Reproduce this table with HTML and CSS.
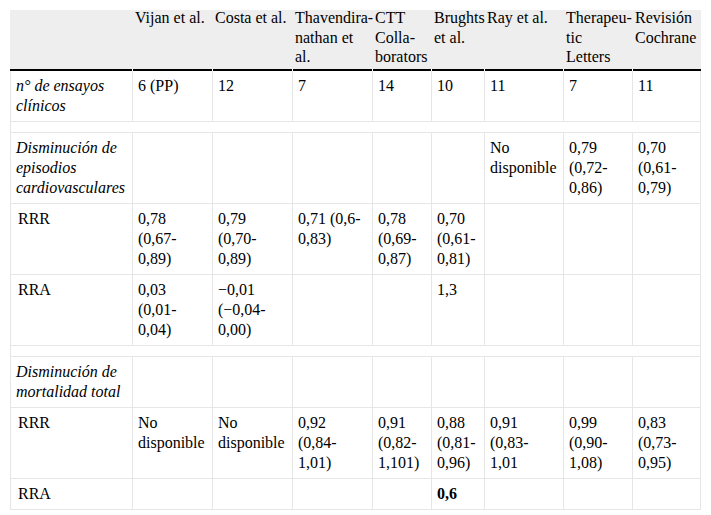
FILE: index.html
```html
<!DOCTYPE html>
<html lang="es">
<head>
<meta charset="utf-8">
<title>Tabla</title>
<link rel="stylesheet" href="styles.css">
</head>
<body>
<table class="data">
  <colgroup>
    <col class="c-label">
    <col class="c-80">
    <col class="c-80">
    <col class="c-80">
    <col class="c-59">
    <col class="c-53">
    <col class="c-79">
    <col class="c-69">
    <col class="c-68">
  </colgroup>
  <thead>
    <tr>
      <th><span class="th-text"></span></th>
      <th><span class="th-text">Vijan et al.</span></th>
      <th><span class="th-text">Costa et al.</span></th>
      <th><span class="th-text">Thavendira&shy;nathan et al.</span></th>
      <th><span class="th-text">CTT Colla&shy;borators</span></th>
      <th><span class="th-text">Brughts et al.</span></th>
      <th><span class="th-text">Ray et al.</span></th>
      <th><span class="th-text">Therapeu&shy;tic Letters</span></th>
      <th><span class="th-text">Revisión Cochrane</span></th>
    </tr>
  </thead>
  <tbody>
    <tr>
      <td class="group">n° de ensayos clínicos</td>
      <td>6 (PP)</td>
      <td>12</td>
      <td>7</td>
      <td>14</td>
      <td>10</td>
      <td>11</td>
      <td>7</td>
      <td>11</td>
    </tr>
    <tr class="spacer"><td colspan="9"></td></tr>
    <tr>
      <td class="group">Disminución de episodios cardiovasculares</td>
      <td></td>
      <td></td>
      <td></td>
      <td></td>
      <td></td>
      <td>No disponible</td>
      <td>0,79 (0,72-0,86)</td>
      <td>0,70 (0,61-0,79)</td>
    </tr>
    <tr>
      <td class="sub">RRR</td>
      <td>0,78 (0,67-0,89)</td>
      <td>0,79 (0,70-0,89)</td>
      <td>0,71 (0,6-0,83)</td>
      <td>0,78 (0,69-0,87)</td>
      <td>0,70 (0,61-0,81)</td>
      <td></td>
      <td></td>
      <td></td>
    </tr>
    <tr>
      <td class="sub">RRA</td>
      <td>0,03 (0,01-0,04)</td>
      <td>−0,01 (−0,04-0,00)</td>
      <td></td>
      <td></td>
      <td>1,3</td>
      <td></td>
      <td></td>
      <td></td>
    </tr>
    <tr class="spacer"><td colspan="9"></td></tr>
    <tr>
      <td class="group">Disminución de mortalidad total</td>
      <td></td>
      <td></td>
      <td></td>
      <td></td>
      <td></td>
      <td></td>
      <td></td>
      <td></td>
    </tr>
    <tr>
      <td class="sub">RRR</td>
      <td>No disponible</td>
      <td>No disponible</td>
      <td>0,92 (0,84-1,01)</td>
      <td>0,91 (0,82-1,101)</td>
      <td>0,88 (0,81-0,96)</td>
      <td>0,91 (0,83-1,01</td>
      <td>0,99 (0,90-1,08)</td>
      <td>0,83 (0,73-0,95)</td>
    </tr>
    <tr>
      <td class="sub">RRA</td>
      <td></td>
      <td></td>
      <td></td>
      <td></td>
      <td class="strong">0,6</td>
      <td></td>
      <td></td>
      <td></td>
    </tr>
  </tbody>
</table>
</body>
</html>
```

FILE: styles.css
```css
html {
  background: #fff;
}

body {
  margin: 10px;
  font-family: "Liberation Serif", "Times New Roman", serif;
  font-size: 16px;
  color: #000;
}

.data {
  width: 691px;
  border-collapse: separate;
  border-spacing: 0;
  table-layout: fixed;
}

.c-label { width: 123px; }
.c-80 { width: 80px; }
.c-59 { width: 59px; }
.c-53 { width: 53px; }
.c-79 { width: 79px; }
.c-69 { width: 69px; }
.c-68 { width: 68px; }

.data th,
.data td {
  box-sizing: border-box;
  text-align: left;
  vertical-align: top;
  font-family: "Liberation Serif", "Times New Roman", serif;
  font-size: 16px;
  font-weight: normal;
  line-height: 20px;
  color: #000;
}

.data th {
  padding: 0 5px 4.5px 2px;
  line-height: 19.5px;
  background-color: #eeeeee;
  background-image: linear-gradient(#000, #000), linear-gradient(#fff, #fff);
  background-size: calc(100% - 1px) 2px, 1px 2px;
  background-position: left bottom, right bottom;
  background-repeat: no-repeat;
}

.data th:last-child {
  background-size: 100% 2px, 0 0;
}

.th-text {
  display: block;
  margin-top: -2px;
}

.data td {
  padding: 5px 8px 5px 5px;
  border-right: 1px solid #e6e6e6;
  border-bottom: 1px solid #e6e6e6;
}

.data td:first-child {
  border-left: 1px solid #e6e6e6;
}

.data .group {
  font-style: italic;
}

.data .sub {
  padding-left: 7px;
}

.data .strong {
  font-weight: bold;
}
```
